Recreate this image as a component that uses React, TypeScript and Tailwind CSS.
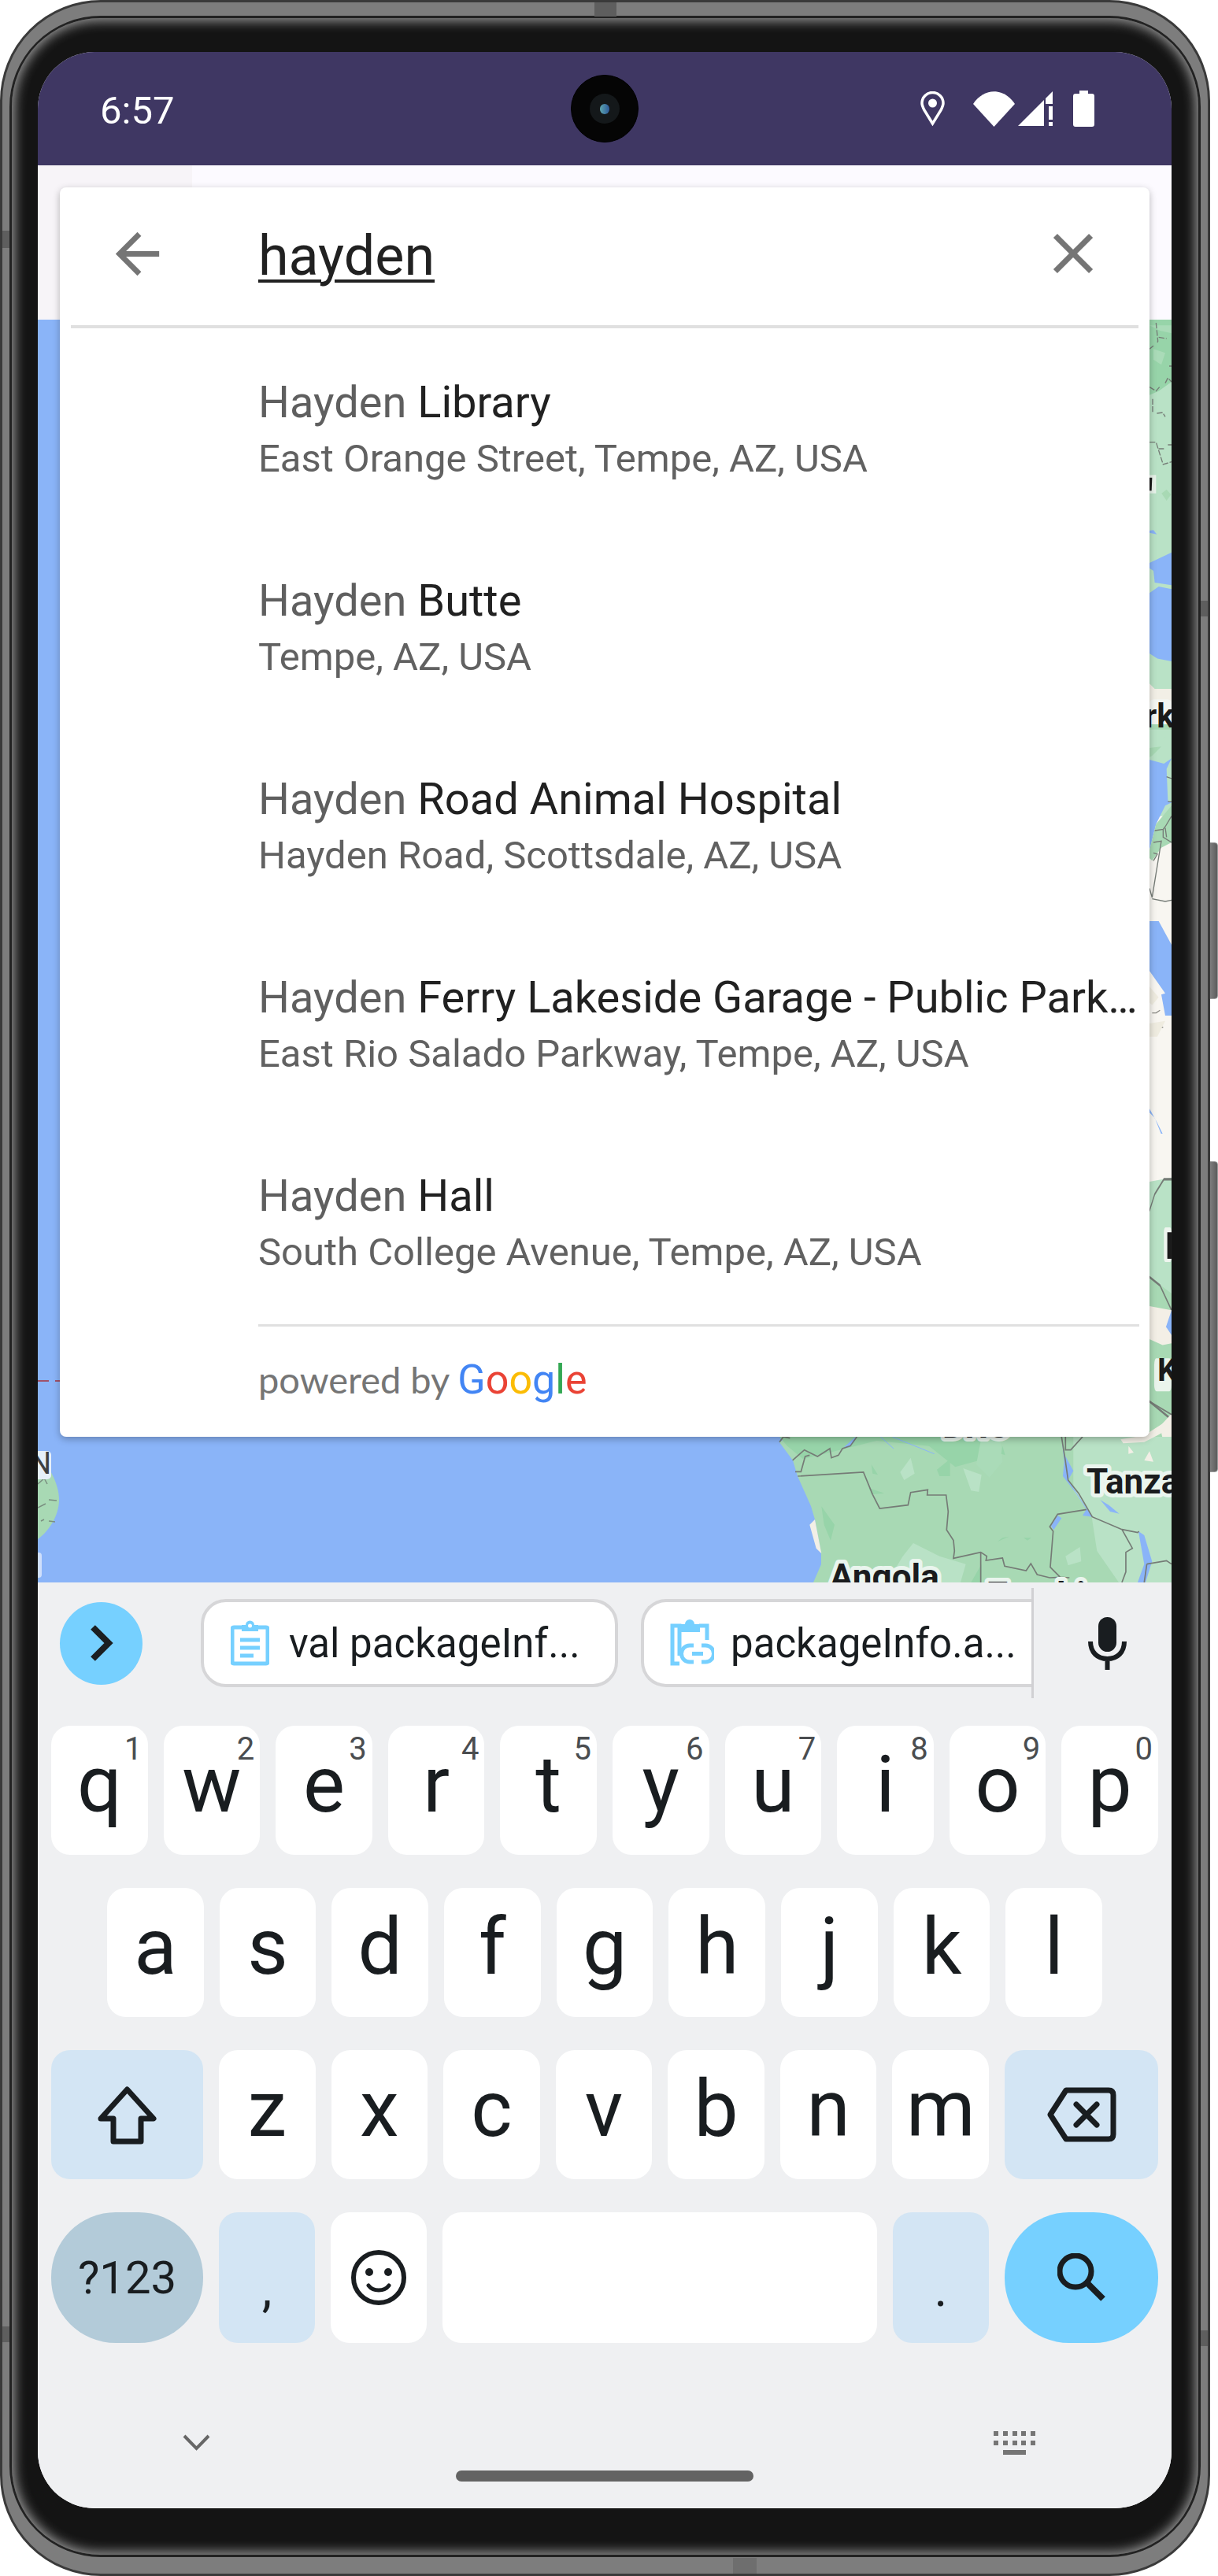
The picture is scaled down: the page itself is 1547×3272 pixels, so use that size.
import React from "react";

const results = [
  { bold: "Library", sub: "East Orange Street, Tempe, AZ, USA" },
  { bold: "Butte", sub: "Tempe, AZ, USA" },
  { bold: "Road Animal Hospital", sub: "Hayden Road, Scottsdale, AZ, USA" },
  { bold: "Ferry Lakeside Garage - Public Parking", sub: "East Rio Salado Parkway, Tempe, AZ, USA" },
  { bold: "Hall", sub: "South College Avenue, Tempe, AZ, USA" },
];

const row1 = [["q", "1"], ["w", "2"], ["e", "3"], ["r", "4"], ["t", "5"], ["y", "6"], ["u", "7"], ["i", "8"], ["o", "9"], ["p", "0"]];
const row2 = ["a", "s", "d", "f", "g", "h", "j", "k", "l"];
const row3 = ["z", "x", "c", "v", "b", "n", "m"];

function MapLayer() {
  return (
    <svg viewBox="48 406 1440 1604" className="w-full h-full block">
      <rect x="48" y="406" width="1440" height="1604" fill="#a8d9b4" />
      <path d="M48 406H1000V1825L990 1832 1007 1855 1013 1875 1030 1913 1035 1930 1043 1973 1043 1987 1033 2010H48Z" fill="#8ab4f8" />
      {/* left strip: equator line and island */}
      <path d="M48 1754H76" stroke="#a0526a" strokeWidth="2" strokeDasharray="14 8" />
      <path d="M48 1850C62 1860 75 1885 75 1905 75 1925 62 1945 48 1955Z" fill="#a8d9b4" />
      <path d="M48 1885 L56 1878 M52 1870 L60 1885 M48 1915 L58 1910 M62 1905 L72 1906 M52 1932 L56 1930 M62 1932 L70 1933" stroke="#7a8f80" strokeWidth="1.5" fill="none" />
      <rect x="40" y="1843" width="25" height="36" rx="5" fill="#e6f0fa" />
      <text x="38" y="1872" fontSize="38" fill="#3c4043" fontFamily="Roboto">N</text>
      <rect x="44" y="1972" width="9" height="32" rx="4" fill="#cfdffb" />
      {/* right strip, top part */}
      <g transform="translate(1400 400) scale(0.3333)">
        <rect x="180" y="18" width="84" height="1412" fill="#b9e2c6" />
        <path d="M180 18H264V255L215 290 180 305Z" fill="#97d4a9" />
        <path d="M195 130L240 145 225 190 195 170ZM180 40H264V70L220 60Z" fill="#aadbb8" />
        <path d="M205 30L212 100 210 105M215 85L245 90M180 130L195 118M255 195L264 195M240 260L250 240 264 255M180 275L205 290 218 275M192 320V370M208 375L230 372 240 388M180 485H205L232 570 264 560M215 510H235M250 495H264" stroke="#757b76" strokeWidth="4" strokeDasharray="22 6" fill="none" />
        <path d="M180 610H205V680H180Z" fill="#e8f3ea" />
        <path d="M180 620H190L188 670H180Z" fill="#1a1a1a" />
        <path d="M226 680L245 665 262 685 245 708Z" fill="#a8d9b4" />
        <path d="M180 822L195 820 208 836 180 830Z" fill="#8ab4f8" />
        <path d="M180 945L264 905V1030L200 1020 195 975 180 965Z" fill="#8ab4f8" />
        <path d="M180 1060L215 1035 264 1045V1320L210 1310 180 1290Z" fill="#8ab4f8" />
        <path d="M180 1405L200 1425H264V1560H180Z" fill="#f2efe6" />
        <rect x="180" y="1465" width="84" height="95" rx="16" fill="#f4f6f2" />
        <text x="162" y="1572" fontSize="125" fontWeight="700" fill="#1a1a1a" fontFamily="Roboto">rk</text>
      </g>
      {/* right strip, middle part */}
      <g transform="translate(1400 920) scale(0.3333)">
        <rect x="180" y="20" width="84" height="340" fill="#b9e2c6" />
        <rect x="180" y="350" width="84" height="1400" fill="#f8f6f1" />
        <path d="M180 90L240 50 264 40V120L235 150 180 135Z" fill="#b9e2c6" />
        <path d="M180 90L225 85 190 120 180 125Z" fill="#a8d9b4" />
        <path d="M180 135L235 150 264 130 245 170 250 290 264 298 240 310 205 380 180 480Z" fill="#8ab4f8" />
        <path d="M180 480L205 380 264 310V450L225 470 190 520 180 510Z" fill="#a8d9b4" />
        <path d="M245 200L264 207M250 295H264M200 405L232 400 240 390 264 350M232 400V430L264 450M240 395L245 430M195 450L225 445 190 660 180 625M195 490L210 495 195 520M190 665L240 675 264 670" stroke="#757b76" strokeWidth="4" fill="none" />
        <path d="M180 750H215L264 840V1110L240 1110 225 1030 240 1025 180 940Z" fill="#8ab4f8" />
        <path d="M190 1100L205 1100 220 1090M190 1155H232" stroke="#8a8a85" strokeWidth="4" fill="none" />
        <path d="M180 1000L215 1040 190 1070 180 1060ZM180 1140L240 1130 210 1190 180 1190Z" fill="#efece0" />
        <path d="M180 1465L210 1520 230 1560H224L200 1500 180 1480Z" fill="#8ab4f8" />
      </g>
      {/* right strip, lower part */}
      <g transform="translate(1200 380) scale(0.3333 1.0526)">
        <rect x="780" y="1065" width="84" height="315" fill="#a8d9b4" />
        <path d="M780 1065L864 1060V1200L780 1180Z" fill="#b9e2c6" />
        <path d="M780 1100L800 1080 835 1062H864M780 1180L820 1190 864 1220" stroke="#757b76" strokeWidth="3" fill="none" />
        <path d="M780 1215L864 1220V1260L830 1262 780 1255Z" fill="#f3efe6" />
        <path d="M843 1240L864 1220V1250Z" fill="#8ab4f8" />
        <rect x="835" y="1120" width="29" height="42" rx="6" fill="#eef5ef" />
        <rect x="848" y="1126" width="16" height="32" fill="#1a1a1a" />
        <rect x="798" y="1278" width="66" height="40" rx="8" fill="#eaf4ec" />
        <path d="M780 1330L864 1352" stroke="#757b76" strokeWidth="3" fill="none" />
        <path d="M820 1360L864 1345V1375L830 1375Z" fill="#f3efe6" />
      </g>
      <text x="1470" y="1754" fontSize="40" fontWeight="700" fill="#1a1a1a" fontFamily="Roboto">K</text>
      {/* bottom part, Congo basin and the lakes */}
      <g transform="translate(980 1780) scale(0.3333)">
        <path d="M30 135H800L810 220 700 250 600 170 400 150 200 200 120 220 60 170Z" fill="#97d4a9" />
        <path d="M1150 135H1524V700H1330L1240 570 1220 440 1150 340Z" fill="#b9e2c6" />
        <path d="M800 135H870L880 230 830 290 780 240Z" fill="#aadbb8" />
        <path d="M500 590L540 540 640 590 740 620 720 690H440ZM730 255L800 280 790 345 760 340ZM490 270L530 215 545 275 505 300ZM1120 590L1175 555 1180 610 1130 625Z" fill="#b9e2c6" />
        <path d="M190 400L240 470 225 530 200 470ZM380 240L405 280 385 275ZM630 260L680 220 680 285 640 285ZM370 330L430 350 380 355ZM880 170L890 205 875 200ZM960 520L990 520 975 530ZM880 520L905 515 860 535ZM800 620L800 690 760 690Z" fill="#97d4a9" />
        <path d="M1330 145L1420 130 1505 75 1524 100 1470 130 1420 155 1340 160ZM1440 190L1455 230 1420 225ZM1360 170L1380 195 1360 200ZM145 470L165 450 190 580 170 560Z" fill="#f2efe6" />
        <path d="M1105 135L1115 200 1150 265 1130 300 1222 440 1185 435 1200 412 1160 350 1110 285 1115 230Z" fill="#8ab4f8" />
        <path d="M1252 375L1285 395 1325 428 1290 420ZM1398 495L1420 510 1450 610 1425 690H1395L1420 620ZM1090 435L1105 445 1075 490 1065 475ZM270 180L320 135 315 155 295 175Z" fill="#8ab4f8" />
        <path d="M415 135L465 180M460 135L620 200" stroke="#8ab4f8" strokeWidth="3" fill="none" />
        <path d="M100 285L350 270 385 355 412 408 520 395 530 347 595 337 593 357 665 357 673 420 667 490 693 530 697 570 693 598 797 575 820 590 817 606 880 597 888 628 970 645 988 618 1012 660 1060 672 1100 670 1135 672M797 575V690M1105 135L1120 230 1130 300 1170 350 1222 440 1335 488 1395 500 1400 495M1200 412L1090 430 1060 478 1073 495 1062 632 1100 670M1335 488L1375 560 1350 575 1350 650 1335 690M1440 0L1524 50M30 155L45 135 70 140M80 225L125 185 175 210 222 180 228 215 255 205 270 180 300 170 325 135M90 268H112L128 210 145 205M1430 620L1505 607 1524 620M1430 620L1420 690M1120 135V185H1140L1185 135" stroke="#757b76" strokeWidth="5" fill="none" />
      </g>
      <g fontFamily="Roboto" fontWeight="700" fontSize="44" fill="#1a1c1e" stroke="#eaf5ee" strokeWidth="10" strokeLinejoin="round" paintOrder="stroke">
        <text x="1380" y="1897">Tanzania</text>
        <text x="1054" y="2018">Angola</text>
        <text x="1254" y="2041">Zambia</text>
        <text x="1197" y="1826">DRC</text>
      </g>
    </svg>
  );
}

function Key({ children, hint }: { children: React.ReactNode; hint?: string }) {
  return (
    <div className="relative flex-1 h-[164px] rounded-[24px] bg-white flex items-center justify-center pb-[14px] text-[100px] leading-none text-[#191d20]">
      {children}
      {hint && <span className="absolute right-[7px] top-[10px] text-[40px] leading-none text-[#4a4d50]">{hint}</span>}
    </div>
  );
}

function Clipboard() {
  return (
    <svg width="49" height="58" viewBox="0 0 49 58" className="shrink-0">
      <path d="M4 9H45Q47 9 47 11V53Q47 55 45 55H4Q2 55 2 53V11Q2 9 4 9Z" fill="none" stroke="#76d0ff" strokeWidth="5" />
      <path d="M14 6H19A5.500 5.500 0 0 1 30 6H35V14H14Z" fill="#76d0ff" />
      <circle cx="24.500" cy="7" r="2.500" fill="#fff" />
      <path d="M12 25H37M12 35H37M12 45H29" stroke="#76d0ff" strokeWidth="5" />
    </svg>
  );
}

function ClipLink() {
  return (
    <svg width="56" height="62" viewBox="0 0 56 62" className="shrink-0">
      <path d="M12 47V9H3V57H12M37 9H47V27" fill="none" stroke="#76d0ff" strokeWidth="5" />
      <path d="M12 7H19A6 6 0 0 1 31 7H38V17H12Z" fill="#76d0ff" />
      <path d="M30 34H25A10.500 10.500 0 0 0 25 55H30M40 34H45A10.500 10.500 0 0 1 45 55H40M28 44.500H42" fill="none" stroke="#76d0ff" strokeWidth="5" />
    </svg>
  );
}

export default function App() {
  return (
    <div className="relative w-[1547px] h-[3272px] bg-white font-['Roboto',sans-serif] overflow-hidden">
      {/* side buttons */}
      <div className="absolute right-0 top-[1070px] w-[14px] h-[199px] rounded-r-[4px] bg-gradient-to-r from-[#8a8a8a] to-[#5c5c5c] border border-[#9a9a9a]" />
      <div className="absolute right-0 top-[1475px] w-[14px] h-[395px] rounded-r-[4px] bg-gradient-to-r from-[#8a8a8a] to-[#5c5c5c] border border-[#9a9a9a]" />

      {/* phone body */}
      <div className="relative w-[1537px] h-full rounded-[128px] border-[3px] border-[#3a3a3a] bg-[#7d7d7d] pt-[17px] pb-[21px] px-[9px]">
        <div className="h-full rounded-[116px] border-[3px] border-[#222222]">
          <div className="h-full rounded-[112px] bg-[#141414] shadow-[inset_0_0_15px_3px_#a0a0a0] pt-[43px] pb-[59px] pl-[33px] pr-[34px]">
            {/* screen */}
            <div className="relative h-full rounded-[72px] overflow-hidden flex flex-col bg-[#eff0f2]">
              {/* status bar */}
              <div className="relative h-[144px] shrink-0 bg-[#3f3763] flex items-center pl-[79px] pr-[98px] text-white">
                <span className="text-[49px] leading-none mt-[4px]">6:57</span>
                <div className="absolute left-[677px] top-[29px] w-[86px] h-[86px] rounded-full bg-[#050505] border border-[#000] flex items-center justify-center">
                  <div className="w-[38px] h-[38px] rounded-full bg-[#14181a] flex items-center justify-center">
                    <div className="w-[12px] h-[13px] rounded-full bg-gradient-to-r from-[#5fa5ad] to-[#2f5a9a]" />
                  </div>
                </div>
                <div className="ml-auto flex items-center">
                  <svg width="31" height="45" viewBox="0 0 31 45">
                    <path d="M15.500 41L5 24C3 20 2 18 2 15A13.500 13.500 0 0 1 29 15C29 18 28 20 26 24Z" fill="none" stroke="#fff" strokeWidth="3.500" />
                    <circle cx="15.500" cy="15" r="5.500" fill="#fff" />
                  </svg>
                  <svg width="53" height="45" viewBox="0 0 53 45" className="ml-[36px]">
                    <path d="M26.500 45L0 16C14 -5 39 -5 53 16Z" fill="#fff" />
                  </svg>
                  <svg width="45" height="44" viewBox="0 0 45 44" className="ml-[4px]">
                    <path d="M0 44L33 11V44Z" fill="#fff" />
                    <path d="M35 9L44 0V16H35Z" fill="#fff" />
                    <rect x="39" y="19" width="5" height="17" fill="#fff" />
                    <rect x="39" y="39" width="5" height="5" fill="#fff" />
                  </svg>
                  <svg width="27" height="46" viewBox="0 0 27 46" className="ml-[25px]">
                    <path d="M8 0H19V4H24Q27 4 27 7V43Q27 46 24 46H3Q0 46 0 43V7Q0 4 3 4H8Z" fill="#fff" />
                  </svg>
                </div>
              </div>

              {/* app bar strip above the map */}
              <div className="h-[196px] shrink-0 bg-[#fcfaff] flex">
                <div className="w-[196px] bg-[#f7f4f8]" />
              </div>

              {/* map */}
              <div className="h-[1604px] shrink-0">
                <MapLayer />
              </div>

              {/* search card, floats over the map */}
              <div className="absolute left-[28px] top-[172px] w-[1384px] h-[1587px] rounded-[8px] bg-white shadow-[0_3px_10px_rgba(0,0,0,0.28)]">
                <div className="h-[175px] flex items-center">
                  <svg width="83" height="83" viewBox="0 0 24 24" className="ml-[57px] mb-[7px] fill-[#757575]">
                    <path d="M20 11H7.830l5.590-5.590L12 4l-8 8 8 8 1.410-1.410L7.830 13H20v-2z" />
                  </svg>
                  <span className="ml-[112px] mb-[2px] text-[70px] leading-none underline decoration-[4px] underline-offset-[6px] text-[#212121]">hayden</span>
                  <svg width="86" height="86" viewBox="0 0 24 24" className="ml-auto mr-[54px] mb-[7px] fill-[#757575]">
                    <path d="M19 6.410L17.590 5 12 10.590 6.410 5 5 6.410 10.590 12 5 17.590 6.410 19 12 13.410 17.590 19 19 17.590 13.410 12z" />
                  </svg>
                </div>
                <div className="mx-[14px] h-[4px] bg-[#e0e0e0]" />
                <div className="pl-[252px] pr-[13px] pt-[2px]">
                  {results.map((r) => (
                    <div key={r.bold} className="h-[252px] pt-[4px] flex flex-col justify-center">
                      <div className="truncate text-[56px] leading-[67px] text-[#212121]">
                        <span className="text-[#5f5f5f]">Hayden </span>
                        {r.bold}
                      </div>
                      <div className="truncate mt-[4px] text-[49px] leading-[67px] text-[#616161]">{r.sub}</div>
                    </div>
                  ))}
                  <div className="h-[3px] bg-[#e0e0e0] mt-[3px]" />
                  <div className="flex items-baseline gap-[10px] pt-[42px] leading-none">
                    <span className="text-[47px] text-[#757575] font-['Lato',sans-serif]">powered by</span>
                    <span className="text-[52px]">
                      <span className="text-[#4285f4]">G</span>
                      <span className="text-[#ea4335]">o</span>
                      <span className="text-[#fbbc05]">o</span>
                      <span className="text-[#4285f4]">g</span>
                      <span className="text-[#34a853]">l</span>
                      <span className="text-[#ea4335]">e</span>
                    </span>
                  </div>
                </div>
              </div>

              {/* keyboard */}
              <div className="flex-1 bg-[#eff0f2] text-[#191d20]">
                {/* suggestion strip */}
                <div className="h-[182px] pt-[21px]">
                  <div className="h-[112px] flex items-center pl-[28px]">
                    <div className="w-[105px] h-[105px] rounded-full bg-[#76d0ff] flex items-center justify-center shrink-0">
                      <svg width="30" height="46" viewBox="0 0 30 46">
                        <path d="M4 3L24 23 4 43" fill="none" stroke="#1b1f22" strokeWidth="8" />
                      </svg>
                    </div>
                    <div className="ml-[74px] w-[530px] h-[112px] rounded-[32px] border-[4px] border-[#d6d6d8] bg-white flex items-center pl-[34px] gap-[25px] shrink-0">
                      <Clipboard />
                      <span className="text-[51px] leading-none whitespace-nowrap">val packageInf...</span>
                    </div>
                    <div className="ml-[29px] w-[496px] h-[112px] rounded-l-[32px] border-[4px] border-r-0 border-[#d6d6d8] bg-white flex items-center pl-[33px] gap-[21px] shrink-0">
                      <ClipLink />
                      <span className="text-[51px] leading-none whitespace-nowrap">packageInfo.a...</span>
                    </div>
                    <div className="w-[3px] h-[140px] bg-[#d0d0d3] shrink-0" />
                    <svg width="49" height="67" viewBox="0 0 49 67" className="ml-[69px] shrink-0">
                      <rect x="13" y="0" width="23" height="44" rx="11.500" fill="#191d20" />
                      <path d="M3 31C3 45 12 53 24.500 53 37 53 46 45 46 31M24.500 53V67" fill="none" stroke="#191d20" strokeWidth="6" />
                    </svg>
                  </div>
                </div>

                {/* keys */}
                <div className="px-[17px] flex flex-col gap-[42px]">
                  <div className="flex gap-[20px]">
                    {row1.map(([k, n]) => (
                      <Key key={k} hint={n}>{k}</Key>
                    ))}
                  </div>
                  <div className="flex gap-[20px] px-[71px]">
                    {row2.map((k) => (
                      <Key key={k}>{k}</Key>
                    ))}
                  </div>
                  <div className="flex gap-[20px]">
                    <div className="w-[193px] h-[164px] rounded-[24px] bg-[#d3e5f4] flex items-center justify-center">
                      <svg width="79" height="76" viewBox="0 0 79 76">
                        <path d="M39.500 6L73 43H57V72H22V43H6Z" fill="none" stroke="#191d20" strokeWidth="7" strokeLinejoin="round" />
                      </svg>
                    </div>
                    {row3.map((k) => (
                      <Key key={k}>{k}</Key>
                    ))}
                    <div className="w-[195px] h-[164px] rounded-[24px] bg-[#d3e5f4] flex items-center justify-center">
                      <svg width="88" height="70" viewBox="0 0 88 70">
                        <path d="M24 4H78Q84 4 84 10V60Q84 66 78 66H24L4 35Z" fill="none" stroke="#191d20" strokeWidth="7" strokeLinejoin="round" />
                        <path d="M37 22L63 48M63 22L37 48" stroke="#191d20" strokeWidth="7" strokeLinecap="round" />
                      </svg>
                    </div>
                  </div>
                  <div className="flex gap-[20px] h-[166px]">
                    <div className="w-[193px] rounded-[82px] bg-[#b3cbd9] flex items-center justify-center text-[58px] leading-none">?123</div>
                    <div className="w-[122px] rounded-[24px] bg-[#d3e5f4] flex justify-center pt-[66px] text-[64px] leading-none">,</div>
                    <div className="w-[122px] rounded-[24px] bg-white flex items-center justify-center">
                      <svg width="70" height="70" viewBox="0 0 70 70">
                        <circle cx="35" cy="35" r="32" fill="none" stroke="#191d20" strokeWidth="6" />
                        <circle cx="23" cy="28" r="5" fill="#191d20" />
                        <circle cx="47" cy="28" r="5" fill="#191d20" />
                        <path d="M22 45C28 53 42 53 48 45" fill="none" stroke="#191d20" strokeWidth="5" strokeLinecap="round" />
                      </svg>
                    </div>
                    <div className="flex-1 rounded-[24px] bg-white" />
                    <div className="w-[122px] rounded-[24px] bg-[#d3e5f4] flex justify-center pt-[66px] text-[64px] leading-none">.</div>
                    <div className="w-[195px] rounded-[82px] bg-[#76d0ff] flex items-center justify-center">
                      <svg width="62" height="62" viewBox="0 0 62 62">
                        <circle cx="23" cy="23" r="20" fill="none" stroke="#191d20" strokeWidth="7" />
                        <path d="M37 37L58 58" stroke="#191d20" strokeWidth="8" />
                      </svg>
                    </div>
                  </div>
                </div>

                {/* navigation row */}
                <div className="mt-[112px] h-[30px] flex items-center justify-between pl-[184px] pr-[173px]">
                  <svg width="35" height="22" viewBox="0 0 35 22">
                    <path d="M2 2L17.500 18 33 2" fill="none" stroke="#666666" strokeWidth="4" />
                  </svg>
                  <svg width="53" height="30" viewBox="0 0 53 30" className="fill-[#757575]">
                    <rect x="0" y="0" width="6" height="6" /><rect x="12" y="0" width="6" height="6" /><rect x="24" y="0" width="6" height="6" /><rect x="35" y="0" width="6" height="6" /><rect x="47" y="0" width="6" height="6" />
                    <rect x="0" y="12" width="6" height="6" /><rect x="12" y="12" width="6" height="6" /><rect x="24" y="12" width="6" height="6" /><rect x="35" y="12" width="6" height="6" /><rect x="47" y="12" width="6" height="6" />
                    <rect x="12" y="24" width="29" height="6" />
                  </svg>
                </div>
                <div className="mt-[20px] mx-auto w-[378px] h-[14px] rounded-full bg-[#636363]" />
              </div>
            </div>
          </div>
        </div>
        {/* rim notches */}
        <div className="absolute left-[752px] top-0 w-[28px] h-[18px] bg-[#5e5e5e]" />
        <div className="absolute left-[928px] bottom-0 w-[30px] h-[20px] bg-[#6e6e6e]" />
        <div className="absolute left-0 top-[290px] w-[9px] h-[22px] bg-[#5e5e5e]" />
        <div className="absolute left-0 top-[2952px] w-[9px] h-[20px] bg-[#5e5e5e]" />
        <div className="absolute right-0 top-[760px] w-[9px] h-[20px] bg-[#5e5e5e]" />
        <div className="absolute right-0 top-[2957px] w-[9px] h-[20px] bg-[#5e5e5e]" />
      </div>
    </div>
  );
}
